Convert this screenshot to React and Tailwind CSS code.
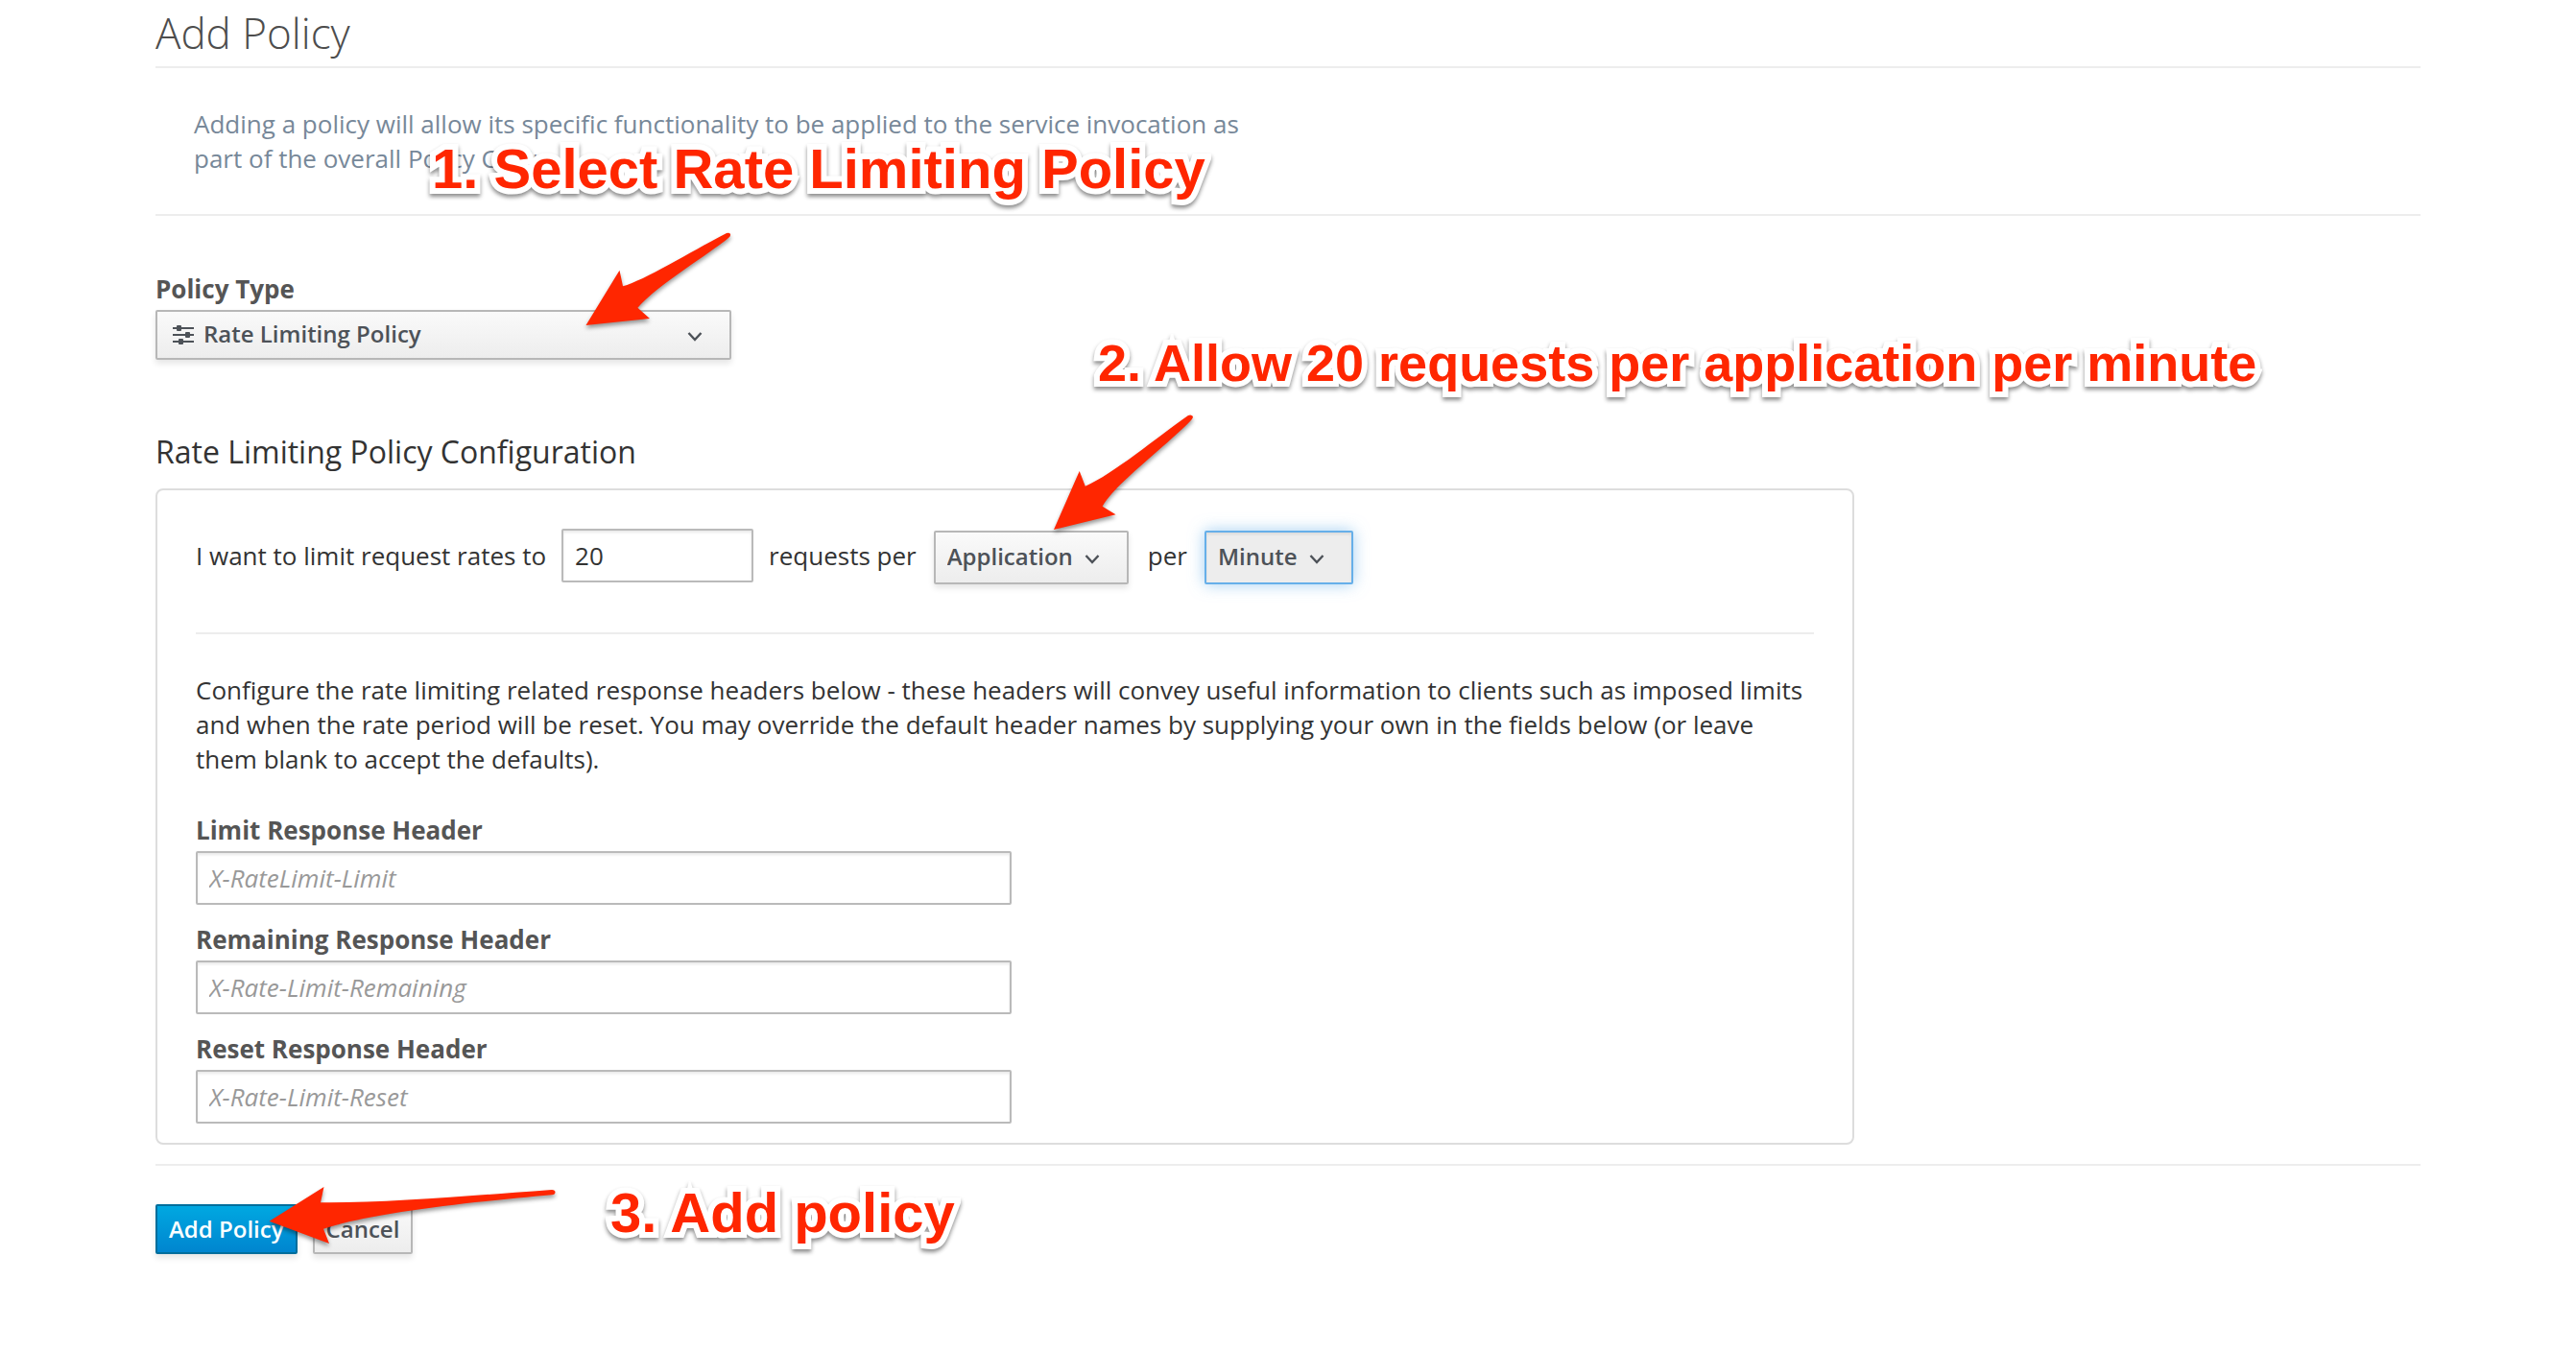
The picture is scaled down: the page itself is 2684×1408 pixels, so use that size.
import React from "react";

function Chevron({ className }) {
  return (
    <svg className={className} width="16" height="12" viewBox="0 0 16 12" fill="none" stroke="#4d5258" strokeWidth="2.4" aria-hidden="true">
      <path d="M1.5 2 L8 9 L14.5 2" />
    </svg>
  );
}

function SlidersIcon({ className }) {
  return (
    <svg className={className} width="22" height="20" viewBox="0 0 22 20" fill="#4d5258" aria-hidden="true">
      <path d="M0 2h22v2H0zM0 9h22v2H0zM0 16h22v2H0z" />
      <rect x="4" y="0" width="5" height="6" rx="1" />
      <rect x="13" y="7" width="5" height="6" rx="1" />
      <rect x="6" y="14" width="5" height="6" rx="1" />
    </svg>
  );
}

function HeaderField({ id, label, placeholder }) {
  return (
    <div>
      <label htmlFor={id} className="mb-1 block font-bold leading-9 text-[#555]">{label}</label>
      <input
        id={id}
        type="text"
        placeholder={placeholder}
        className="block h-14 w-[850px] max-w-full rounded-xs border-2 border-[#bababa] bg-white px-3 text-[26px] shadow-[inset_0_2px_3px_rgba(3,3,3,0.09)] placeholder:text-[#999] placeholder:italic"
      />
    </div>
  );
}

const selectBase = "appearance-none rounded-xs border-2 font-semibold text-[#4d5258] outline-none";
const selectIdle = "border-[#b7b7b7] bg-linear-to-b from-[#fafafa] to-[#ededed] shadow-[0_4px_6px_rgba(3,3,3,0.1)]";
const noteText =
  "absolute whitespace-nowrap font-['Liberation_Sans',sans-serif] font-bold text-[#ff2600] [-webkit-text-stroke:12px_white] [paint-order:stroke_fill] [stroke-linejoin:round] drop-shadow-[0_3px_2px_rgba(0,0,0,0.45)]";
const arrow = "absolute overflow-visible fill-[#ff2600] drop-shadow-[0_3px_2px_rgba(0,0,0,0.4)]";

export default function App() {
  return (
    <div className="relative min-h-screen overflow-hidden bg-white px-[162px] font-['Open_Sans',sans-serif] text-[26px] text-[#333]">
      <main>
        <h1 className="border-b-2 border-[#ededed] text-[44px] font-light leading-[69px] text-[#4d4d4d]">Add Policy</h1>
        <div className="border-b-2 border-[#ededed] py-10">
          <p className="w-1/2 px-10 leading-9 text-[#778899]">
            Adding a policy will allow its specific functionality to be applied to the service invocation as part of the overall Policy Chain.
          </p>
        </div>

        <form onSubmit={(e) => e.preventDefault()}>
          <label htmlFor="policy-type" className="mt-[58px] mb-1 block font-bold leading-9 text-[#555]">Policy Type</label>
          <div className="relative w-[600px]">
            <select id="policy-type" defaultValue="rate" className={`${selectBase} ${selectIdle} block h-[52px] w-full pb-0.5 pl-12 text-[24px]`}>
              <option value="rate">Rate Limiting Policy</option>
            </select>
            <SlidersIcon className="pointer-events-none absolute left-[18px] top-4" />
            <Chevron className="pointer-events-none absolute right-[30px] top-[22px]" />
          </div>

          <h2 className="mt-[74px] mb-4 text-[32px] leading-[44px]">Rate Limiting Policy Configuration</h2>
          <section className="w-3/4 rounded-lg border-2 border-[#ddd] px-10 pt-10 pb-5">
            <div className="flex items-start leading-[56px]">
              <label htmlFor="rate">I want to limit request rates to</label>
              <input
                id="rate"
                type="text"
                defaultValue="20"
                className="ml-4 mr-4 h-14 w-[200px] rounded-xs border-2 border-[#bababa] bg-white px-3 text-[26px] shadow-[inset_0_2px_3px_rgba(3,3,3,0.09)]"
              />
              <label htmlFor="granularity">requests per</label>
              <div className="relative mt-0.5 mr-5 ml-[18px]">
                <select id="granularity" defaultValue="app" className={`${selectBase} ${selectIdle} block h-14 w-[203px] pb-0.5 pl-3 text-[24px] leading-8`}>
                  <option value="app">Application</option>
                </select>
                <Chevron className="pointer-events-none absolute right-[30px] top-6" />
              </div>
              <label htmlFor="period">per</label>
              <div className="relative mt-0.5 ml-[18px]">
                <select
                  id="period"
                  defaultValue="minute"
                  className={`${selectBase} block h-14 w-[155px] border-[#66afe9] bg-[#ededed] pb-0.5 pl-3 text-[24px] leading-8 shadow-[inset_0_2px_3px_rgba(0,0,0,0.08),0_0_16px_rgba(102,175,233,0.6)]`}
                >
                  <option value="minute">Minute</option>
                </select>
                <Chevron className="pointer-events-none absolute right-[30px] top-6" />
              </div>
            </div>
            <hr className="mt-[50px] mb-10 border-t-2 border-[#ededed]" />
            <p className="mb-[38px] leading-9">
              Configure the rate limiting related response headers below - these headers will convey useful information to clients such as imposed limits and when the rate period will be reset. You may override the default header names by supplying your own in the fields below (or leave them blank to accept the defaults).
            </p>
            <div className="flex flex-col gap-[18px]">
              <HeaderField id="limit" label="Limit Response Header" placeholder="X-RateLimit-Limit" />
              <HeaderField id="remaining" label="Remaining Response Header" placeholder="X-Rate-Limit-Remaining" />
              <HeaderField id="reset" label="Reset Response Header" placeholder="X-Rate-Limit-Reset" />
            </div>
          </section>

          <hr className="mt-5 border-t-2 border-[#ededed]" />
          <div className="mt-10 flex gap-4 text-[24px] font-semibold">
            <button type="submit" className="h-[52px] rounded-xs border-2 border-[#006e9c] bg-linear-to-b from-[#00a8e1] to-[#0085cf] px-3 leading-[48px] text-white shadow-[0_4px_6px_rgba(3,3,3,0.1)]">
              Add Policy
            </button>
            <button type="button" className={`${selectBase} ${selectIdle} h-[52px] px-3 leading-[48px]`}>Cancel</button>
          </div>
        </form>
      </main>

      <aside className="pointer-events-none absolute inset-0" aria-label="Steps">
        <span className={`${noteText} left-[450px] top-[144px] text-[58px] leading-[64px]`}>1. Select Rate Limiting Policy</span>
        <span className={`${noteText} left-[1144px] top-[346px] text-[54px] leading-[64px]`}>2. Allow 20 requests per application per minute</span>
        <span className={`${noteText} left-[636px] top-[1232px] text-[58px] leading-[64px]`}>3. Add policy</span>
        <svg className={`${arrow} left-[610px] top-[240px]`} width="152" height="100" viewBox="610 240 152 100">
          <path d="M610.5 339 L645.5 281.7 L649 298.3 C672 292 720 262 757 243 Q760 242 761 244 Q761.5 246 759 248 C740 264 685 297 664.4 320.7 L677 332 Z" />
        </svg>
        <svg className={`${arrow} left-[1098px] top-[432px]`} width="146" height="120" viewBox="1098 432 146 120">
          <path d="M1098 552 L1124.7 491 L1130.8 506.7 C1160 494 1205 456 1238 433 Q1241 431.5 1243 434 Q1243 436 1241 438 C1214 466 1162 504 1148.6 527.7 L1162.5 536.3 Z" />
        </svg>
        <svg className={`${arrow} left-[280px] top-[1237px]`} width="300" height="60" viewBox="280 1237 300 60">
          <path d="M280.6 1272.7 L337.5 1237 L334 1253.3 C400 1254 480 1247 575 1240 Q578.5 1240 578.5 1242.5 Q578.5 1245 575 1245.3 C500 1252 390 1263 337 1280.7 L343 1296 Z" />
        </svg>
      </aside>
    </div>
  );
}
